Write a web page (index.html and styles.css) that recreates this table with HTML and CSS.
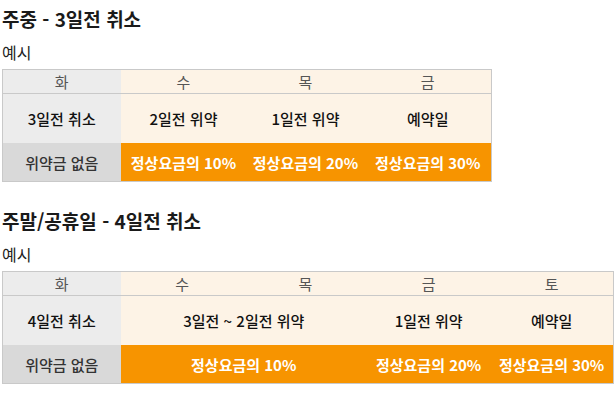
FILE: index.html
```html
<!DOCTYPE html>
<html lang="ko">
<head>
<meta charset="utf-8">
<link rel="stylesheet" href="styles.css">
</head>
<body>
<section class="block">
  <h2 class="title">주중 - 3일전 취소</h2>
  <p class="sub">예시</p>
  <table class="fee fee-3">
    <colgroup><col class="c1"><col class="c2"><col class="c3"><col></colgroup>
    <tr class="head"><th class="gray">화</th><th>수</th><th>목</th><th>금</th></tr>
    <tr class="mid"><td class="gray">3일전 취소</td><td>2일전 위약</td><td>1일전 위약</td><td>예약일</td></tr>
    <tr class="low"><td class="gray">위약금 없음</td><td>정상요금의 10%</td><td>정상요금의 20%</td><td>정상요금의 30%</td></tr>
  </table>
</section>
<section class="block second">
  <h2 class="title">주말/공휴일 - 4일전 취소</h2>
  <p class="sub">예시</p>
  <table class="fee fee-4">
    <colgroup><col class="c1"><col><col><col><col></colgroup>
    <tr class="head"><th class="gray">화</th><th>수</th><th>목</th><th>금</th><th>토</th></tr>
    <tr class="mid"><td class="gray">4일전 취소</td><td colspan="2">3일전 ~ 2일전 위약</td><td>1일전 위약</td><td>예약일</td></tr>
    <tr class="low"><td class="gray">위약금 없음</td><td colspan="2">정상요금의 10%</td><td>정상요금의 20%</td><td>정상요금의 30%</td></tr>
  </table>
</section>
</body>
</html>
```
FILE: styles.css
```css
html, body {
  margin: 0;
  padding: 0;
  background: #fff;
}
body {
  font-family: "Noto Sans CJK KR", "Noto Sans", sans-serif;
  color: #222;
  padding: 0 2px;
}
.block {
  display: flex;
  flex-direction: column;
}
.title {
  margin: 0;
  padding-top: 7px;
  font-size: 19px;
  font-weight: 700;
  line-height: 24px;
  color: #1a1a1a;
}
.sub {
  margin: 0;
  padding-top: 9px;
  font-size: 16px;
  line-height: 24px;
  color: #222;
}
.second {
  margin-top: 20px;
}
.fee {
  border-collapse: collapse;
  table-layout: fixed;
  border: 1px solid #c9c9c9;
  margin-top: 5px;
}
.fee-3 { width: 490px; }
.fee-4 { width: 612px; }
.c1 { width: 118px; }
.fee-3 .c2 { width: 126px; }
.fee-3 .c3 { width: 118px; }
.fee th, .fee td {
  padding: 0;
  text-align: center;
  background: #fdf3e6;
}
.fee .head th {
  height: 23px;
  font-size: 15px;
  font-weight: 400;
  color: #555;
  border-bottom: 1px solid #c9c9c9;
}
.fee .mid td {
  height: 49px;
  font-size: 15px;
  font-weight: 500;
  color: #111;
}
.fee .low td {
  height: 38px;
  font-size: 15px;
  font-weight: 700;
  color: #fff;
  background: #f79400;
}
.fee .head .gray, .fee .mid .gray {
  background: #ececec;
}
.fee .low .gray {
  background: #d9d9d9;
  color: #333;
  font-weight: 500;
}
```
